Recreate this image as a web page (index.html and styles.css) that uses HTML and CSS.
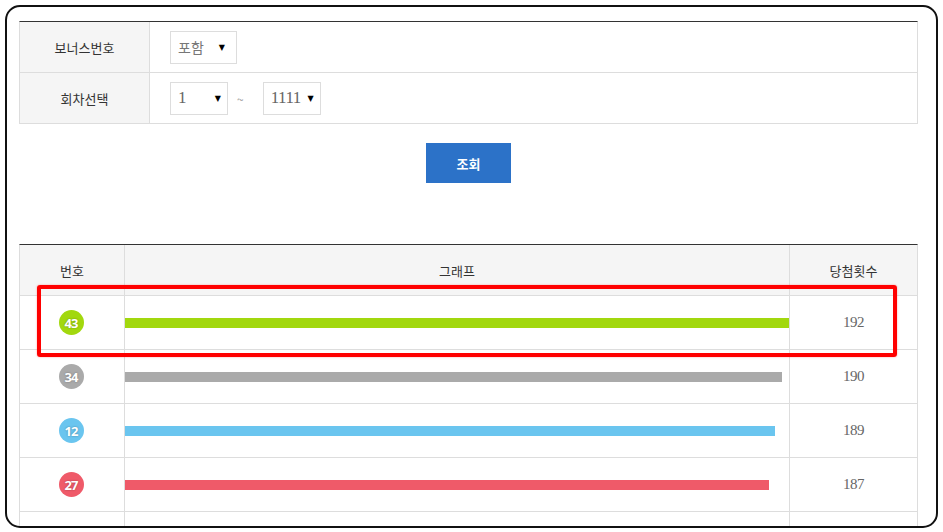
FILE: index.html
```html
<!DOCTYPE html>
<html lang="ko">
<head>
<meta charset="utf-8">
<title>당첨번호 통계</title>
<link rel="stylesheet" href="styles.css">
</head>
<body>
<div class="frame">
  <div class="search">
    <div class="srow">
      <div class="slabel">보너스번호</div>
      <div class="sfield">
        <div class="select sel-bonus"><span class="ko">포함</span><span class="arrow">▼</span></div>
      </div>
    </div>
    <div class="srow">
      <div class="slabel">회차선택</div>
      <div class="sfield">
        <div class="select sel-draw"><span class="num">1</span><span class="arrow">▼</span></div>
        <span class="tilde">~</span>
        <div class="select sel-draw"><span class="num">1111</span><span class="arrow">▼</span></div>
      </div>
    </div>
  </div>

  <div class="btnwrap"><button class="btn">조회</button></div>

  <div class="result">
    <div class="rrow head">
      <div class="c1">번호</div>
      <div class="c2">그래프</div>
      <div class="c3">당첨횟수</div>
    </div>
    <div class="rrow">
      <div class="c1"><span class="ball green">43</span></div>
      <div class="c2"><span class="bar green" style="width:665px"></span></div>
      <div class="c3 cnt">192</div>
    </div>
    <div class="rrow">
      <div class="c1"><span class="ball gray">34</span></div>
      <div class="c2"><span class="bar gray" style="width:657px"></span></div>
      <div class="c3 cnt">190</div>
    </div>
    <div class="rrow">
      <div class="c1"><span class="ball blue">12</span></div>
      <div class="c2"><span class="bar blue" style="width:650px"></span></div>
      <div class="c3 cnt">189</div>
    </div>
    <div class="rrow">
      <div class="c1"><span class="ball red">27</span></div>
      <div class="c2"><span class="bar red" style="width:644px"></span></div>
      <div class="c3 cnt">187</div>
    </div>
    <div class="rrow">
      <div class="c1"></div>
      <div class="c2"></div>
      <div class="c3"></div>
    </div>
  </div>
</div>
<div class="highlight"></div>
</body>
</html>
```
FILE: styles.css
```css
html, body {
  margin: 0;
  padding: 0;
  background: #fff;
}
body {
  font-family: "Noto Sans CJK KR", "Noto Sans", sans-serif;
  color: #333;
  position: relative;
  width: 943px;
  height: 532px;
  overflow: hidden;
}
.frame {
  box-sizing: border-box;
  margin: 5px 0 0 5px;
  width: 933px;
  height: 523px;
  border: 2px solid #111;
  border-radius: 15px;
  overflow: hidden;
  padding: 14px 17px 0 12px;
}

/* search table */
.search {
  width: 899px;
  border-top: 1px solid #333;
  border-right: 1px solid #ddd;
  border-left: 1px solid #ddd;
  box-sizing: border-box;
}
.srow {
  display: flex;
  height: 51px;
  box-sizing: border-box;
  border-bottom: 1px solid #ddd;
}
.slabel {
  width: 129px;
  flex: none;
  background: #f5f5f5;
  border-right: 1px solid #ddd;
  display: flex;
  align-items: center;
  justify-content: center;
  font-size: 13px;
  color: #333;
}
.sfield {
  display: flex;
  align-items: center;
  padding-left: 20px;
}
.select {
  box-sizing: border-box;
  height: 33px;
  border: 1px solid #ddd;
  display: flex;
  align-items: center;
  justify-content: space-between;
  padding: 0 9px 0 7px;
  color: #666;
  background: #fff;
}
.sel-bonus { width: 67px; padding-right: 11px; }
.sel-draw { width: 58px; padding-right: 6px; }
.ko { font-size: 14px; color: #777; }
.num {
  font-family: "Liberation Serif", serif;
  font-size: 17px;
  color: #666;
  letter-spacing: -0.5px;
}
.arrow {
  font-size: 8px;
  color: #000;
  font-family: "DejaVu Sans", sans-serif;
}
.tilde {
  font-size: 12px;
  color: #999;
  margin: 0 19px 0 9px;
}

/* button */
.btnwrap {
  width: 899px;
  display: flex;
  justify-content: center;
  padding-top: 19px;
}
.btn {
  width: 85px;
  height: 40px;
  border: none;
  background: #2c72c8;
  color: #fff;
  font-family: "Noto Sans CJK KR", sans-serif;
  font-weight: 700;
  font-size: 13px;
  padding: 0;
}

/* result table */
.result {
  margin-top: 61px;
  width: 899px;
  box-sizing: border-box;
  border-top: 1px solid #333;
  border-left: 1px solid #ddd;
  border-right: 1px solid #ddd;
}
.rrow {
  display: flex;
  height: 54px;
  border-bottom: 1px solid #ddd;
  box-sizing: border-box;
}
.rrow.head {
  height: 51px;
  background: #f5f5f5;
  font-size: 13px;
  color: #333;
}
.c1, .c2, .c3 {
  display: flex;
  align-items: center;
  justify-content: center;
  box-sizing: border-box;
}
.c1 { width: 105px; border-right: 1px solid #ddd; flex: none; }
.c2 { width: 665px; border-right: 1px solid #ddd; flex: none; justify-content: flex-start; }
.head .c2 { justify-content: center; }
.c3 { flex: 1; }
.cnt {
  font-family: "Liberation Serif", serif;
  font-size: 15px;
  color: #666;
  letter-spacing: -0.5px;
}
.ball {
  width: 25px;
  height: 25px;
  border-radius: 50%;
  display: flex;
  align-items: center;
  justify-content: center;
  color: #fff;
  font-family: "Noto Sans", sans-serif;
  font-weight: 700;
  font-size: 13px;
  letter-spacing: -1px;
  text-shadow: 0 0 2px rgba(0,0,0,0.35);
  margin-left: -2px;
}
.bar {
  display: block;
  height: 10px;
}
.green { background: #a2d80e; }
.gray { background: #aaaaaa; }
.blue { background: #6ac5ef; }
.red { background: #ef5a69; }

/* red annotation */
.highlight {
  position: absolute;
  left: 37px;
  top: 285px;
  width: 860px;
  height: 72px;
  box-sizing: border-box;
  border: 4.5px solid #f00;
  border-radius: 3px;
  box-shadow: 0 0 2px rgba(255,0,0,0.4);
}
```
